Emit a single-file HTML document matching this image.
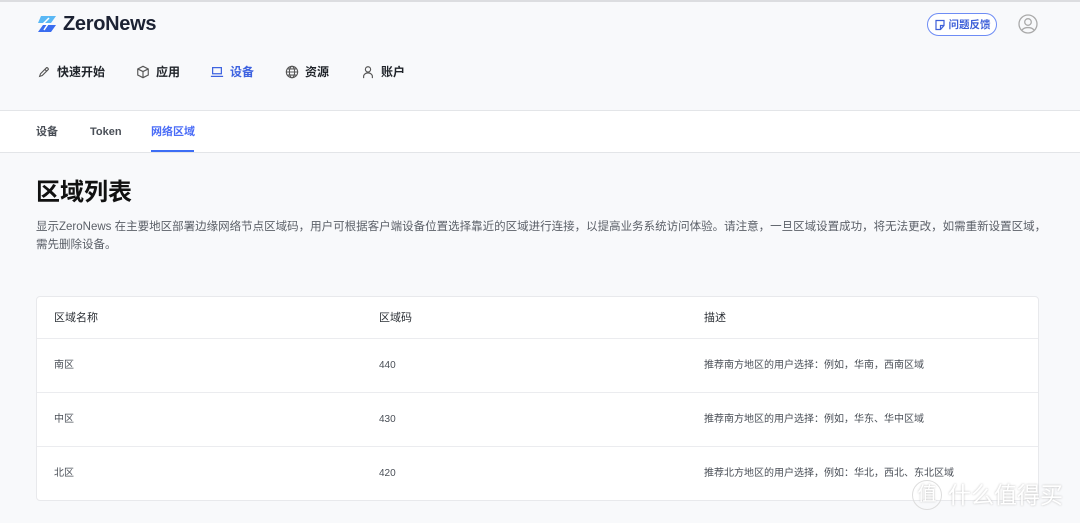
<!DOCTYPE html>
<html><head><meta charset="utf-8"><style>
*{margin:0;padding:0;box-sizing:border-box}
body{width:1080px;height:523px;overflow:hidden;background:#f8f9fb;font-family:"Liberation Sans","Noto Sans CJK SC",sans-serif;color:#1f2329;position:relative;line-height:1.2}
.topbar{height:2px;background:#dcdde0}
.header{height:109px;background:#f8f9fb;border-bottom:1px solid #e3e5e8;position:relative}
.logo{position:absolute;left:36px;top:12px;display:flex;align-items:center;gap:5px;font-size:20px;line-height:20px;font-weight:bold;color:#1c2233;letter-spacing:-0.3px}
.nav{position:absolute;top:63px;left:37px;display:flex;font-size:12px;line-height:14px;font-weight:bold;color:#1f2329}
.nav div{display:flex;align-items:center;gap:6px}
.nav svg{width:14px;height:14px}
.fb{position:absolute;left:927px;top:11px;width:70px;height:23px;border:1px solid #6e8cf5;border-radius:12px;font-size:10.5px;line-height:12px;color:#3d5fd8;display:flex;align-items:center;justify-content:center;gap:3px;font-weight:bold;background:#fff}
.av{position:absolute;left:1018px;top:12px}
.tabs{height:42px;background:#fff;border-bottom:1px solid #e3e5e8;position:relative;font-size:11px;line-height:12px;font-weight:bold;color:#4a4f57}
.tabs span{position:absolute;top:15px}
.tabs .act{color:#4a6cf7}
.tabs .ul{position:absolute;left:151px;top:39px;width:43px;height:2px;background:#3d6ef5}
h1{position:absolute;left:36px;top:179px;font-size:24px;line-height:28px;font-weight:bold;color:#111}
.desc{position:absolute;left:36px;top:218px;width:1012px;font-size:11.5px;line-height:18px;color:#5b6068}
.card{position:absolute;left:36px;top:296px;width:1003px;height:205px;background:#fff;border:1px solid #e8e9ec;border-radius:4px;font-size:10px;line-height:12px;color:#4a4f57}
.row{position:absolute;left:0;width:100%;border-bottom:1px solid #ebecef}
.row span{position:absolute}
.c1{left:17px}.c2{left:342px}.c3{left:667px}
.hd{font-size:11px;color:#2a2e34}
.wm{position:absolute;left:912px;top:480px;font-size:23px;line-height:30px;color:#fff;text-shadow:0 0 2px #bbb;display:flex;align-items:center;gap:6px}
.wm b{display:inline-flex;width:30px;height:30px;border:1.5px solid #ddd;border-radius:50%;align-items:center;justify-content:center;font-weight:normal;font-size:19px}
</style></head><body>
<div class="topbar"></div>
<div class="header">
 <div class="logo"><svg width="22" height="18" viewBox="0 0 22 18"><path d="M5 1h15l-5 7H2z" fill="#5ab8f5"/><path d="M7 10h13l-5 7H2z" fill="#3a6df0"/><path d="M13 3l-6 6h5l-4 6" stroke="#fff" stroke-width="1.5" fill="none"/></svg>ZeroNews</div>
 <div class="nav">
  <div style="width:99px"><svg viewBox="0 0 16 16" fill="none" stroke="#555" stroke-width="1.3"><path d="M3 13l3-1 7-7a2 2 0 0 0-2-2L4 10z"/><path d="M9 5l2 2"/></svg>快速开始</div>
  <div style="width:74px"><svg viewBox="0 0 16 16" fill="none" stroke="#555" stroke-width="1.3"><path d="M8 1.5l6 3v7l-6 3-6-3v-7z M2 4.5l6 3 6-3 M8 7.5v7"/></svg>应用</div>
  <div style="width:75px;color:#3d62e0"><svg viewBox="0 0 16 16" fill="none" stroke="#3d62e0" stroke-width="1.4"><rect x="3" y="3" width="10" height="7"/><path d="M1 13h14"/></svg>设备</div>
  <div style="width:76px"><svg viewBox="0 0 16 16" fill="none" stroke="#555" stroke-width="1.2"><circle cx="8" cy="8" r="6.5"/><ellipse cx="8" cy="8" rx="3" ry="6.5"/><path d="M1.5 8h13M3 4.5h10M3 11.5h10"/></svg>资源</div>
  <div><svg viewBox="0 0 16 16" fill="none" stroke="#555" stroke-width="1.3"><circle cx="8" cy="5" r="3"/><path d="M3 15v-2a5 4 0 0 1 10 0v2"/></svg>账户</div>
 </div>
 <div class="fb"><svg width="12" height="12" viewBox="0 0 12 12" fill="none" stroke="#3d5fd8" stroke-width="1.2"><path d="M2 1.5h8v5l-3.5 4H2z M6.5 10.5v-4h3.5"/></svg>问题反馈</div>
 <svg class="av" width="20" height="20" viewBox="0 0 20 20" fill="none" stroke="#aaa" stroke-width="1.3"><circle cx="10" cy="10" r="9"/><circle cx="10" cy="8" r="3.3"/><path d="M4 16a7 5 0 0 1 12 0"/></svg>
</div>
<div class="tabs"><span style="left:36px">设备</span><span style="left:90px">Token</span><span class="act" style="left:151px">网络区域</span><div class="ul"></div></div>
<h1>区域列表</h1>
<div class="desc">显示ZeroNews 在主要地区部署边缘网络节点区域码，用户可根据客户端设备位置选择靠近的区域进行连接，以提高业务系统访问体验。请注意，一旦区域设置成功，将无法更改，如需重新设置区域，<br>需先删除设备。</div>
<div class="card">
 <div class="row hd" style="top:0;height:42px"><span class="c1" style="top:15px">区域名称</span><span class="c2" style="top:15px">区域码</span><span class="c3" style="top:15px">描述</span></div>
 <div class="row" style="top:42px;height:54px"><span class="c1" style="top:21px">南区</span><span class="c2" style="top:21px">440</span><span class="c3" style="top:21px">推荐南方地区的用户选择：例如，华南，西南区域</span></div>
 <div class="row" style="top:96px;height:54px"><span class="c1" style="top:21px">中区</span><span class="c2" style="top:21px">430</span><span class="c3" style="top:21px">推荐南方地区的用户选择：例如，华东、华中区域</span></div>
 <div class="row" style="top:150px;height:54px;border:none"><span class="c1" style="top:21px">北区</span><span class="c2" style="top:21px">420</span><span class="c3" style="top:21px">推荐北方地区的用户选择，例如：华北，西北、东北区域</span></div>
</div>
<div class="wm"><b>值</b>什么值得买</div>
</body></html>
